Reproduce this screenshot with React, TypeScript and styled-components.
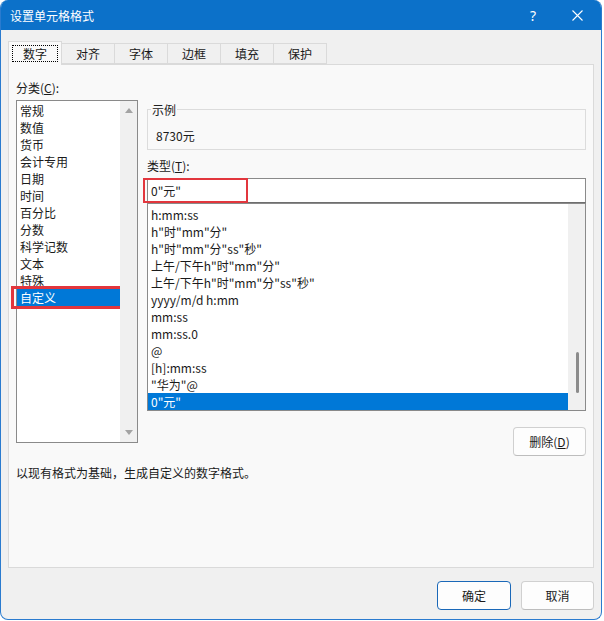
import styled, { createGlobalStyle } from "styled-components";

const GlobalStyle = createGlobalStyle`
    html, body {
        margin: 0;
        padding: 0;
        background: #ffffff;
    }
    * {
        box-sizing: border-box;
    }
    body {
        font-family: "Noto Sans CJK SC", "Noto Sans", sans-serif;
        font-size: 12px;
        color: #1a1a1a;
    }
`;

const Window = styled.div`
    width: 602px;
    height: 620px;
    border: 1px solid #2a7bcf;
    border-top: none;
    border-radius: 8px;
    overflow: hidden;
    background: #f0f0f0;
    display: flex;
    flex-direction: column;
`;

const TitleBar = styled.div`
    height: 30px;
    background: #0c71c9;
    color: #fff;
    display: flex;
    align-items: center;
    padding-left: 9px;
    font-size: 12px;
    .title {
        flex: 1;
    }
    .help {
        width: 44px;
        text-align: center;
        font-size: 14px;
        font-family: "Noto Sans", sans-serif;
    }
    .close {
        width: 44px;
        display: flex;
        justify-content: center;
        margin-right: 2px;
    }
`;

const Body = styled.div`
    flex: 1;
    display: flex;
    flex-direction: column;
    padding: 11px 7px 0 7px;
`;

const TabStrip = styled.div`
    display: flex;
    align-items: flex-end;
    height: 23px;
    position: relative;
    z-index: 1;
`;

const Tab = styled.div<{ $active?: boolean }>`
    height: ${(p) => (p.$active ? "24px" : "21px")};
    margin-bottom: ${(p) => (p.$active ? "-1px" : "0")};
    padding: ${(p) => (p.$active ? "3px" : "0 14px")};
    border: 1px solid #dadada;
    border-bottom: ${(p) => (p.$active ? "none" : "1px solid #dadada")};
    border-left: ${(p) => (p.$active ? "1px solid #dadada" : "none")};
    background: ${(p) => (p.$active ? "#f9f9f9" : "#f0f0f0")};
    display: flex;
    align-items: center;
    justify-content: center;
    line-height: 17px;
    .focus {
        border: 1px dotted #000;
        padding: 0 10px;
        height: 17px;
        display: flex;
        align-items: center;
    }
`;

const Panel = styled.div`
    height: 504px;
    background: #f9f9f9;
    border: 1px solid #dadada;
    padding: 14px 7px 0 7px;
    display: flex;
    flex-direction: column;
`;

const Columns = styled.div`
    display: grid;
    grid-template-columns: 122px 439px;
    column-gap: 9px;
`;

const Column = styled.div<{ $top?: number }>`
    display: flex;
    flex-direction: column;
    padding-top: ${(p) => p.$top ?? 0}px;
`;

const Label = styled.div`
    line-height: 17px;
    height: 17px;
    u {
        text-decoration: underline;
    }
`;

const ListBox = styled.div<{ $height: number; $clip?: boolean }>`
    height: ${(p) => p.$height}px;
    background: #fff;
    border: 1px solid #8a8a8a;
    display: flex;
    overflow: ${(p) => (p.$clip ? "hidden" : "visible")};
`;

const Items = styled.div<{ $top: number }>`
    flex: 1;
    padding-top: ${(p) => p.$top}px;
    display: flex;
    flex-direction: column;
`;

const Item = styled.div<{ $selected?: boolean }>`
    height: 17px;
    line-height: 17px;
    padding-left: 3px;
    white-space: nowrap;
    background: ${(p) => (p.$selected ? "#0078d7" : "transparent")};
    color: ${(p) => (p.$selected ? "#ffffff" : "#1a1a1a")};
    position: relative;
`;

const Mark = styled.span<{ $inset: string; $width: number }>`
    position: absolute;
    inset: ${(p) => p.$inset};
    border: ${(p) => p.$width}px solid #e2363d;
    pointer-events: none;
`;

const ScrollTrack = styled.div`
    width: 17px;
    background: #f0f0f0;
    display: flex;
    flex-direction: column;
    justify-content: space-between;
    align-items: center;
    padding: 7px 0;
    position: relative;
`;

const Arrow = styled.div<{ $down?: boolean }>`
    width: 0;
    height: 0;
    border-left: 4px solid transparent;
    border-right: 4px solid transparent;
    border-bottom: ${(p) => (p.$down ? "none" : "5px solid #a3a3a3")};
    border-top: ${(p) => (p.$down ? "5px solid #a3a3a3" : "none")};
`;

const Thumb = styled.div`
    position: absolute;
    left: 8px;
    width: 3px;
    border-radius: 2px;
    background: #8b8b8b;
`;

const GroupBox = styled.fieldset`
    margin: 0;
    height: 49px;
    border: 1px solid #dcdcdc;
    padding: 0 8px;
    legend {
        margin-left: -5px;
        padding: 0 1px;
        line-height: 17px;
        color: #222;
    }
    .sample {
        padding-top: 9px;
        line-height: 17px;
    }
`;

const TypeInput = styled.div`
    margin-top: 4px;
    height: 25px;
    background: #fff;
    border: 1px solid #8a8a8a;
    border-bottom-color: #6e6e6e;
    padding-left: 3px;
    display: flex;
    align-items: center;
    position: relative;
`;

const Button = styled.button<{ $default?: boolean }>`
    height: 29px;
    width: ${(p) => (p.$default ? "74px" : "73px")};
    background: #fdfdfd;
    border: 1px solid ${(p) => (p.$default ? "#1a68b8" : "#d0d0d0")};
    border-bottom-color: ${(p) => (p.$default ? "#1a68b8" : "#bdbdbd")};
    border-radius: 4px;
    font-family: inherit;
    font-size: 12px;
    color: #1a1a1a;
    padding: 0;
    u {
        text-decoration: underline;
    }
`;

const RightAlign = styled.div`
    display: flex;
    justify-content: flex-end;
    margin-top: 16px;
`;

const Description = styled.div`
    margin-top: 8px;
    line-height: 17px;
`;

const Footer = styled.div`
    display: flex;
    justify-content: flex-end;
    gap: 10px;
    margin-top: 13px;
`;

const categories = [
    "常规",
    "数值",
    "货币",
    "会计专用",
    "日期",
    "时间",
    "百分比",
    "分数",
    "科学记数",
    "文本",
    "特殊",
    "自定义",
];

const formats = [
    "h:mm:ss",
    'h"时"mm"分"',
    'h"时"mm"分"ss"秒"',
    '上午/下午h"时"mm"分"',
    '上午/下午h"时"mm"分"ss"秒"',
    "yyyy/m/d h:mm",
    "mm:ss",
    "mm:ss.0",
    "@",
    "[h]:mm:ss",
    '"华为"@',
    '0"元"',
];

const tabs = ["数字", "对齐", "字体", "边框", "填充", "保护"];

export default function App() {
    const lastCategory = categories.length - 1;
    const lastFormat = formats.length - 1;

    return (
        <>
            <GlobalStyle />
            <Window>
                <TitleBar>
                    <span className="title">设置单元格格式</span>
                    <span className="help">?</span>
                    <span className="close">
                        <svg width="11" height="11" viewBox="0 0 11 11">
                            <path
                                d="M0.5 0.5 L10.5 10.5 M10.5 0.5 L0.5 10.5"
                                stroke="#fff"
                                strokeWidth="1.1"
                            />
                        </svg>
                    </span>
                </TitleBar>
                <Body>
                    <TabStrip>
                        {tabs.map((t, i) =>
                            i === 0 ? (
                                <Tab key={t} $active>
                                    <span className="focus">{t}</span>
                                </Tab>
                            ) : (
                                <Tab key={t}>{t}</Tab>
                            ),
                        )}
                    </TabStrip>
                    <Panel>
                        <Columns>
                            <Column>
                                <Label>
                                    分类(<u>C</u>):
                                </Label>
                                <ListBox $height={343} style={{ marginTop: 4 }}>
                                    <Items $top={1}>
                                        {categories.map((c, i) => (
                                            <Item key={c} $selected={i === lastCategory}>
                                                {c}
                                                {i === lastCategory && (
                                                    <Mark $inset="-3px -4px -3px -6px" $width={3} />
                                                )}
                                            </Item>
                                        ))}
                                    </Items>
                                    <ScrollTrack>
                                        <Arrow />
                                        <Arrow $down />
                                    </ScrollTrack>
                                </ListBox>
                            </Column>
                            <Column $top={22}>
                                <GroupBox>
                                    <legend>示例</legend>
                                    <div className="sample">8730元</div>
                                </GroupBox>
                                <Label style={{ marginTop: 7 }}>
                                    类型(<u>T</u>):
                                </Label>
                                <TypeInput>
                                    0"元"
                                    <Mark $inset="-1px auto -1px -5px" $width={2} style={{ width: 105 }} />
                                </TypeInput>
                                <ListBox $height={208} $clip>
                                    <Items $top={2}>
                                        {formats.map((f, i) => (
                                            <Item key={f} $selected={i === lastFormat}>
                                                <span>{f}</span>
                                            </Item>
                                        ))}
                                    </Items>
                                    <ScrollTrack>
                                        <Thumb style={{ top: 148, height: 41 }} />
                                    </ScrollTrack>
                                </ListBox>
                                <RightAlign>
                                    <Button>
                                        删除(<u>D</u>)
                                    </Button>
                                </RightAlign>
                            </Column>
                        </Columns>
                        <Description>以现有格式为基础，生成自定义的数字格式。</Description>
                    </Panel>
                    <Footer>
                        <Button $default>确定</Button>
                        <Button>取消</Button>
                    </Footer>
                </Body>
            </Window>
        </>
    );
}
